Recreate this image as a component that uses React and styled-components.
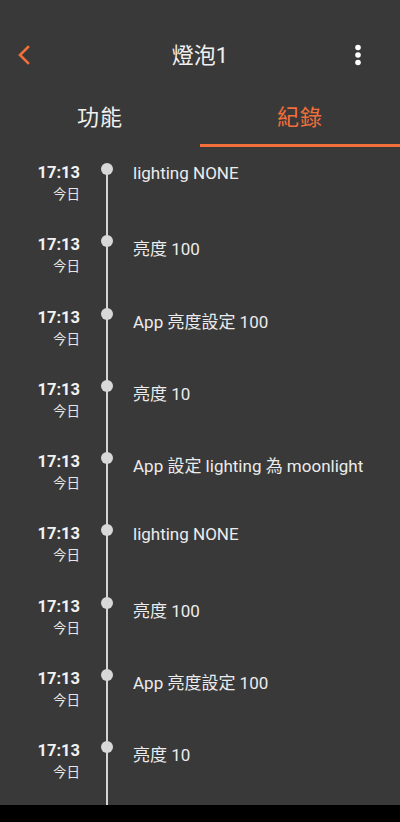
import styled, { createGlobalStyle } from "styled-components";

const ORANGE = "#f26f3a";

const logs = [
  "lighting NONE",
  "亮度 100",
  "App 亮度設定 100",
  "亮度 10",
  "App 設定 lighting 為 moonlight",
  "lighting NONE",
  "亮度 100",
  "App 亮度設定 100",
  "亮度 10",
];

export default function App() {
  return (
    <>
      <GlobalStyle />
      <Screen>
        <Main>
          <AppBar>
            <BackButton aria-label="back">
              <svg width="14" height="20" viewBox="0 0 14 20">
                <polyline
                  points="11,2 3,10 11,18"
                  fill="none"
                  stroke={ORANGE}
                  strokeWidth="2.6"
                  strokeLinecap="square"
                />
              </svg>
            </BackButton>
            <Title>燈泡1</Title>
            <MenuButton aria-label="more">
              <svg width="8" height="24" viewBox="0 0 8 24">
                <circle cx="4" cy="4.5" r="2.8" fill="#fff" />
                <circle cx="4" cy="12" r="2.8" fill="#fff" />
                <circle cx="4" cy="19.5" r="2.8" fill="#fff" />
              </svg>
            </MenuButton>
          </AppBar>
          <Tabs>
            <Tab>功能</Tab>
            <Tab $active>紀錄</Tab>
          </Tabs>
          <List>
            {logs.map((text, i) => (
              <Row key={i}>
                <When>
                  <Time>17:13</Time>
                  <Day>今日</Day>
                </When>
                <Rail $first={i === 0}>
                  <Dot />
                </Rail>
                <Message>{text}</Message>
              </Row>
            ))}
          </List>
        </Main>
        <NavBar />
      </Screen>
    </>
  );
}

const GlobalStyle = createGlobalStyle`
  html, body {
    margin: 0;
    padding: 0;
    background: #393939;
  }
  * {
    box-sizing: border-box;
  }
`;

const Screen = styled.div`
  width: 400px;
  height: 822px;
  display: flex;
  flex-direction: column;
  background: #393939;
  font-family: Roboto, "Noto Sans CJK TC", sans-serif;
  color: #ececec;
`;

const Main = styled.div`
  flex: 1;
  min-height: 0;
  display: flex;
  flex-direction: column;
  overflow: hidden;
`;

const AppBar = styled.div`
  height: 90px;
  padding: 20px 12px 0 12px;
  display: grid;
  grid-template-columns: 1fr auto 1fr;
  align-items: center;
  flex-shrink: 0;
`;

const BackButton = styled.div`
  justify-self: start;
  width: 24px;
  height: 70px;
  display: flex;
  align-items: center;
  justify-content: center;
`;

const MenuButton = styled.div`
  justify-self: end;
  width: 8px;
  height: 70px;
  margin-right: 26px;
  display: flex;
  align-items: center;
  justify-content: center;
`;

const Title = styled.div`
  font-size: 22px;
  color: #f0f0f0;
  line-height: 1;
  margin-top: 2px;
`;

const Tabs = styled.div`
  display: flex;
  height: 57px;
  flex-shrink: 0;
`;

const Tab = styled.div`
  flex: 1;
  display: flex;
  align-items: center;
  justify-content: center;
  padding-bottom: 5px;
  font-size: 22px;
  letter-spacing: 1px;
  color: ${({ $active }) => ($active ? ORANGE : "#f0f0f0")};
  border-bottom: 3px solid ${({ $active }) => ($active ? ORANGE : "transparent")};
`;

const List = styled.div`
  padding-top: 16px;
  display: flex;
  flex-direction: column;
`;

const Row = styled.div`
  display: flex;
  height: 72.25px;
  flex-shrink: 0;
`;

const When = styled.div`
  width: 80px;
  display: flex;
  flex-direction: column;
  align-items: flex-end;
  gap: 1px;
`;

const Time = styled.div`
  font-size: 16.5px;
  font-weight: 700;
  line-height: 20px;
  color: #f2f2f2;
`;

const Day = styled.div`
  font-size: 13.5px;
  line-height: 20px;
  color: #e6e6e6;
`;

const Rail = styled.div`
  width: 53px;
  position: relative;
  display: flex;
  justify-content: center;

  &::before {
    content: "";
    position: absolute;
    left: 25.5px;
    width: 2px;
    top: ${({ $first }) => ($first ? "6px" : "0")};
    bottom: 0;
    background: #d4d4d4;
  }
`;

const Dot = styled.div`
  position: relative;
  width: 12px;
  height: 12px;
  border-radius: 50%;
  background: #d8d8d8;
`;

const Message = styled.div`
  font-size: 17px;
  line-height: normal;
  color: #ececec;
`;

const NavBar = styled.div`
  height: 17px;
  background: #000;
  flex-shrink: 0;
`;
